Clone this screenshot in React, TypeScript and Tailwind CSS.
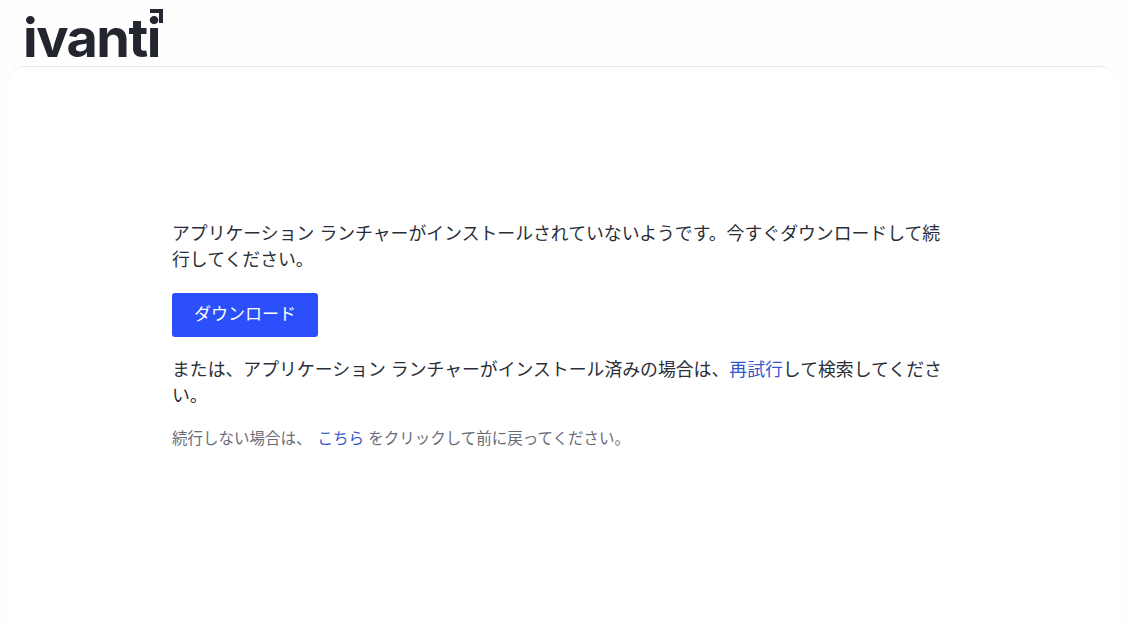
// Launcher prompt
import React from 'react';

const jpFont = "font-['Inter','Noto_Sans_CJK_JP',sans-serif]";

const Logo = () => (
  <div className="relative h-[66px] w-[180px] pl-[23px]">
    <span className="block font-['Inter',sans-serif] text-[54px] leading-[75px] font-bold tracking-[-1.5px] text-[#23262f]">ivanti</span>
    {/* corner mark over the last i */}
    <svg className="absolute top-[9px] left-[149px]" width="14" height="14" viewBox="0 0 14 14">
      <path d="M1 0h13v14h-4V4H1z" fill="#23262f" />
    </svg>
  </div>
);

export default function App() {
  return (
    <div className={`${jpFont} flex h-[625px] flex-col overflow-hidden bg-[#fefefe]`}>
      <Logo />
      <main className="mx-[9px] flex-1 rounded-t-2xl border-t border-[#e8eaed] bg-white pt-[154px] pl-[163px]">
        <div className="w-[780px] text-[17.85px] leading-[25.5px] text-[#2a2e37]">
          <p>アプリケーション ランチャーがインストールされていないようです。今すぐダウンロードして続行してください。</p>
          <button className="mt-[21px] mb-5 flex h-[44px] w-[146px] items-center justify-center rounded-[3px] bg-[#2b50fb] text-[17px] font-normal text-white">
            ダウンロード
          </button>
          <p>
            または、アプリケーション ランチャーがインストール済みの場合は、<a className="text-[#3557cc]">再試行</a>して検索してください。
          </p>
          <p className="mt-[21px] text-[15.5px] leading-[20px] text-[#6a6d78]">
            続行しない場合は、 <a className="ml-[1.5px] text-[#3557cc]">こちら</a> をクリックして前に戻ってください。
          </p>
        </div>
      </main>
    </div>
  );
}
